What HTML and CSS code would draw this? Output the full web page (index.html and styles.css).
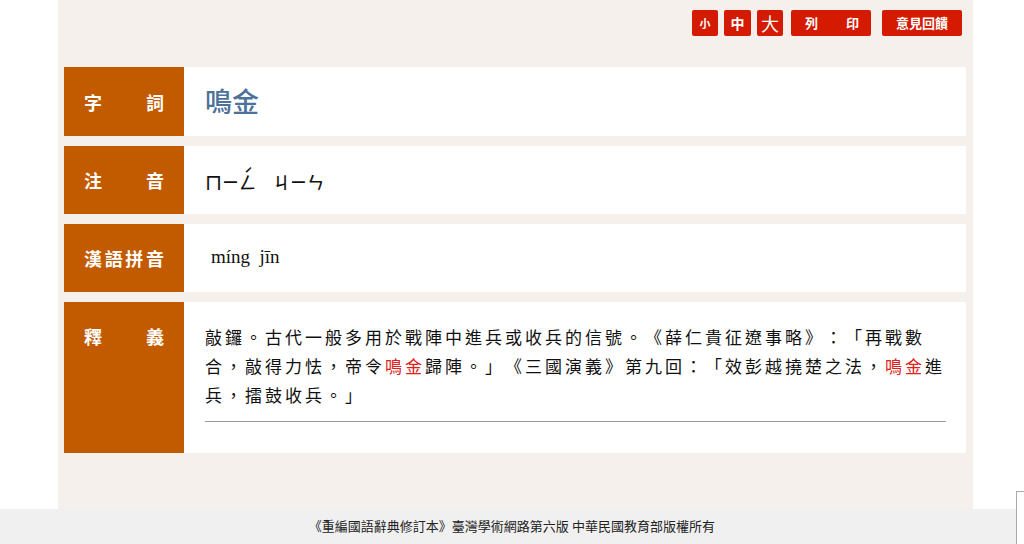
FILE: index.html
```html
<!DOCTYPE html>
<html lang="zh-Hant">
  <head>
    <meta charset="UTF-8">
    <title>鳴金 - 重編國語辭典修訂本</title>
    <meta name="viewport" content="width=device-width, initial-scale=1.0">
    <link rel="stylesheet" href="styles.css">
  </head>
  <body>

    <div class="page">
      <div class="tools">
        <button class="btn size-s">小</button>
        <button class="btn size-m">中</button>
        <button class="btn size-l">大</button>
        <button class="btn print"><span>列</span><span>印</span></button>
        <button class="btn feedback">意見回饋</button>
      </div>

      <div class="entry">
        <div class="row">
          <div class="label"><span>字</span><span>詞</span></div>
          <div class="value word">鳴金</div>
        </div>
        <div class="row">
          <div class="label"><span>注</span><span>音</span></div>
          <div class="value bopomofo">ㄇㄧㄥ<span class="tone">ˊ</span><span class="gap"></span>ㄐㄧㄣ</div>
        </div>
        <div class="row">
          <div class="label"><span>漢</span><span>語</span><span>拼</span><span>音</span></div>
          <div class="value pinyin">míng&nbsp; jīn</div>
        </div>
        <div class="row top">
          <div class="label"><span>釋</span><span>義</span></div>
          <div class="value def">
            <p>敲鑼。古代一般多用於戰陣中進兵或收兵的信號。《薛仁貴征遼事略》：「再戰數合，敲得力怯，帝令<em>鳴金</em>歸陣。」《三國演義》第九回：「效彭越撓楚之法，<em>鳴金</em>進兵，擂鼓收兵。」</p>
            <hr>
          </div>
        </div>
      </div>
    </div>

    <!-- footer -->
    <div class="footer">《重編國語辭典修訂本》臺灣學術網路第六版 中華民國教育部版權所有</div>

    <div class="corner"></div>

  </body>
</html>
```

FILE: styles.css
```css
* { box-sizing: border-box; }

body {
  margin: 0;
  background: #fff;
  font-family: "Liberation Serif", "Noto Sans CJK TC", serif;
  color: #111;
  height: 544px;
  overflow: hidden;
}

.page {
  width: 915px;
  height: 509px;
  margin-left: 58px;
  background: #f6f0ec;
  padding: 10px 7px 0 6px;
}

/* toolbar */
.tools {
  display: flex;
  justify-content: flex-end;
  gap: 6px;
  padding-right: 4px;
  height: 26px;
}

.btn {
  height: 26px;
  border: none;
  border-radius: 2px;
  background: #d41a00;
  color: #fff;
  font-family: "Noto Sans CJK TC", sans-serif;
  font-weight: bold;
  padding: 0;
  cursor: pointer;
  line-height: 26px;
}

.size-s { width: 26px; font-size: 11px; }
.size-m { width: 27px; font-size: 14px; }
.size-l { width: 26px; font-size: 18px; font-weight: normal; }

.print {
  width: 80px;
  margin-left: 2px;
  font-size: 13px;
  display: flex;
  justify-content: space-between;
  padding: 0 12px 0 14px;
}

.feedback {
  width: 80px;
  margin-left: 5px;
  font-size: 13px;
}

/* entry table */
.entry {
  margin-top: 31px;
  display: flex;
  flex-direction: column;
  gap: 10px;
}

.row {
  display: flex;
  min-height: 68px;
}

.row:first-child { height: 69px; }

.label {
  width: 120px;
  flex-shrink: 0;
  background: #c25a00;
  color: #fff;
  font-family: "Noto Sans CJK TC", sans-serif;
  font-weight: bold;
  font-size: 18px;
  padding: 0 20px;
  display: flex;
  align-items: center;
  justify-content: space-between;
}

.value {
  flex: 1;
  background: #fff;
  display: flex;
  align-items: center;
  padding-left: 21px;
}

.word {
  color: #4d7199;
  font-family: "Noto Sans CJK TC", sans-serif;
  font-weight: 500;
  font-size: 27px;
  padding-left: 21px;
  padding-bottom: 2px;
}

.bopomofo {
  font-family: "Noto Sans CJK TC", sans-serif;
  font-weight: 500;
  font-size: 17px;
  padding-top: 2px;
}

.bopomofo .tone {
  margin-left: -12px;
  margin-top: -16px;
  font-size: 15px;
}

.bopomofo .gap {
  width: 20px;
}

.pinyin {
  font-size: 19px;
  padding-left: 27px;
  padding-bottom: 2px;
}

.row.top { height: 151px; }

.row.top .label {
  align-items: flex-start;
  padding-top: 20px;
  line-height: 29px;
}

.def {
  display: block;
  padding: 20px 20px 0 21px;
}

.def p {
  margin: 0;
  font-family: "Noto Sans CJK TC", sans-serif;
  font-size: 17px;
  line-height: 29px;
  letter-spacing: 3px;
  text-spacing-trim: space-all;
}

.def em {
  font-style: normal;
  color: #e0201a;
}

.def hr {
  margin: 12px 0 0;
  border: none;
  border-top: 1px solid #9a9a9a;
}

/* footer */
.footer {
  height: 35px;
  background: #f0f0f0;
  text-align: center;
  font-size: 13px;
  line-height: 35px;
  color: #222;
}

.corner {
  position: fixed;
  left: 1016px;
  top: 491px;
  width: 20px;
  height: 60px;
  border-left: 1px solid #aaa;
  border-top: 1px solid #aaa;
  background: #fff;
}
```
